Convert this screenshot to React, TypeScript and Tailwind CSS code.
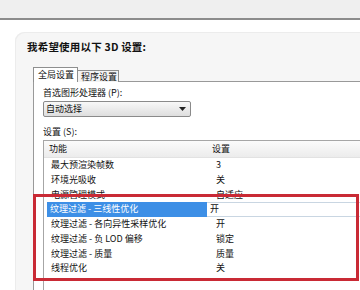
import React from "react";

const rows: { name: string; value: string; selected?: boolean }[] = [
  { name: "最大预渲染帧数", value: "3" },
  { name: "环境光吸收", value: "关" },
  { name: "电源管理模式", value: "自适应" },
  { name: "纹理过滤 - 三线性优化", value: "开", selected: true },
  { name: "纹理过滤 - 各向异性采样优化", value: "开" },
  { name: "纹理过滤 - 负 LOD 偏移", value: "锁定" },
  { name: "纹理过滤 - 质量", value: "质量" },
  { name: "线程优化", value: "关" },
];

export default function App() {
  return (
    <div
      className="relative w-[360px] h-[290px] overflow-hidden bg-white text-[#111] flex flex-col"
      style={{ fontFamily: '"Noto Sans CJK SC", "Noto Sans", sans-serif' }}
    >
      {/* top bar */}
      <div className="h-[20px] bg-[#efefef] border-b-2 border-[#8c8c8c] shrink-0" />
      <div className="flex-1 pt-[12px] pl-[15px] flex flex-col">
        <div className="flex-1 rounded-tl-[9px] bg-[#f6f6f6] pl-[12px] pt-[8px] flex flex-col shadow-[inset_1px_1px_0_#ececec]">
          <div className="text-[10.5px] leading-[14px] font-bold tracking-[0.2px]">我希望使用以下 3D 设置:</div>
          {/* tabs */}
          <div className="flex items-end ml-[6px] mt-[13px] h-[15px] relative z-10 -mb-px">
            <div className="h-[15px] w-[45px] bg-white border border-b-0 border-[#8e8f8f] text-[9px] leading-[13px] pl-[4px]">
              全局设置
            </div>
            <div className="h-[12px] w-[42px] -ml-px bg-[#f3f3f3] border border-b-0 border-[#8e8f8f] text-[9px] leading-[11px] pl-[3px]">
              程序设置
            </div>
          </div>
          {/* tab panel */}
          <div className="flex-1 ml-[6px] bg-white border-t border-l border-[#999999] pl-[9px] pt-[5px] flex flex-col">
            <div className="text-[9px] leading-[12px]">首选图形处理器 (P):</div>
            <div className="mt-[2px] w-[148px] h-[16px] rounded-[2px] border border-[#8a8a8a] bg-gradient-to-b from-[#f8f8f8] to-[#dedede] flex items-center justify-between pl-[2px] pr-[4px]">
              <span className="text-[9px] leading-[12px]">自动选择</span>
              <svg width="7" height="4" viewBox="0 0 7 4">
                <path d="M0 0 H7 L3.5 4 Z" fill="#222" />
              </svg>
            </div>
            <div className="mt-[9px] text-[9px] leading-[12px]">设置 (S):</div>
            <div className="mt-[2px] flex-1 border-t border-l border-[#a6a6a6] bg-white flex flex-col">
              <div className="h-[16.6px] flex items-center bg-gradient-to-b from-[#fbfbfb] to-[#ececec] border-b border-[#e2e2e2] text-[9px]">
                <div className="w-[163px] pl-[5px]">功能</div>
                <div className="pl-[5px]">设置</div>
              </div>
              {rows.map((r) =>
                r.selected ? (
                  <div key={r.name} className="h-[14.75px] flex items-center pl-[3px] text-[9px]">
                    <div className="w-[160px] h-full bg-[#3d8fe6] text-white pl-[3px] flex items-center">{r.name}</div>
                    <div className="flex-1 h-full border-y border-[#c9d6e2] pl-[3px] flex items-center">{r.value}</div>
                  </div>
                ) : (
                  <div key={r.name} className="h-[14.75px] flex items-center pl-[3px] text-[9px]">
                    <div className="w-[160px] pl-[4px]">{r.name}</div>
                    <div className="pl-[9px]">{r.value}</div>
                  </div>
                )
              )}
            </div>
          </div>
        </div>
      </div>
      {/* red annotation box */}
      <div className="absolute left-[33px] top-[194px] w-[326px] h-[87px] border-[3px] border-[#c92a35] pointer-events-none" />
    </div>
  );
}
